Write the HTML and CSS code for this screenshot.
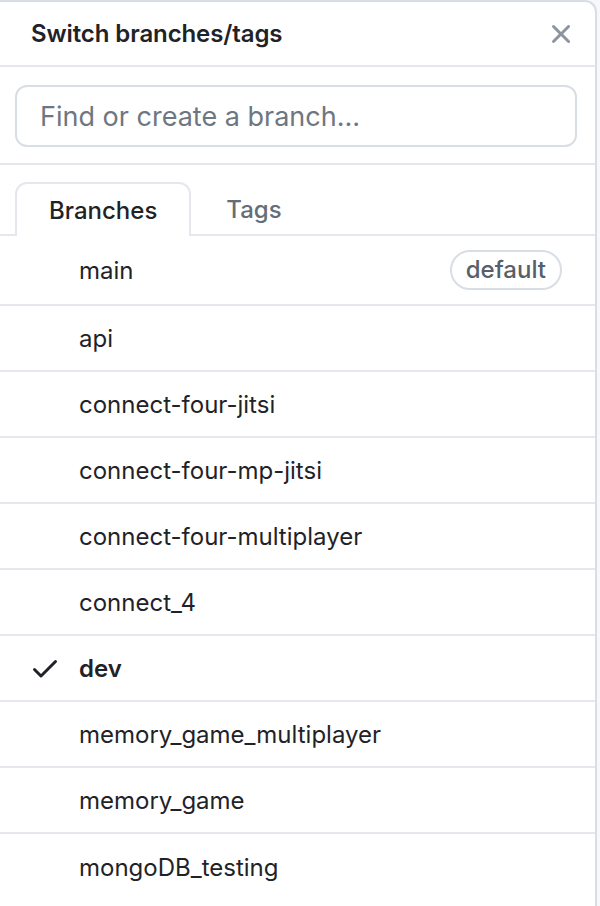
FILE: index.html
```html
<!DOCTYPE html>
<html>
<head>
<meta charset="utf-8">
<link rel="stylesheet" href="styles.css">
</head>
<body>
<div class="page">
  <div class="menu">
    <header class="menu-header">
      <span class="menu-title">Switch branches/tags</span>
      <button class="close" aria-label="Close">
        <svg width="32" height="32" viewBox="0 0 16 16"><path fill="currentColor" d="M3.72 3.72a.75.75 0 0 1 1.06 0L8 6.94l3.220-3.22a.749.749 0 0 1 1.275.326.749.749 0 0 1-.215.734L9.06 8l3.22 3.22a.749.749 0 0 1-.326 1.275.749.749 0 0 1-.734-.215L8 9.06l-3.22 3.22a.751.751 0 0 1-1.042-.018.751.751 0 0 1-.018-1.042L6.94 8 3.72 4.78a.75.75 0 0 1 0-1.06Z"/></svg>
      </button>
    </header>
    <div class="filter">
      <input class="filter-input" type="text" placeholder="Find or create a branch…">
    </div>
    <nav class="tabs">
      <span class="tab selected">Branches</span>
      <span class="tab">Tags</span>
    </nav>
    <ul class="list">
      <li class="item"><span class="check"></span><span class="name">main</span><span class="badge">default</span></li>
      <li class="item"><span class="check"></span><span class="name">api</span></li>
      <li class="item"><span class="check"></span><span class="name">connect-four-jitsi</span></li>
      <li class="item"><span class="check"></span><span class="name">connect-four-mp-jitsi</span></li>
      <li class="item"><span class="check"></span><span class="name">connect-four-multiplayer</span></li>
      <li class="item"><span class="check"></span><span class="name">connect_4</span></li>
      <li class="item current"><span class="check"><svg width="32" height="32" viewBox="0 0 16 16"><path fill="currentColor" d="M13.78 4.22a.75.75 0 0 1 0 1.06l-7.25 7.25a.75.75 0 0 1-1.060 0L2.22 9.28a.751.751 0 0 1 .018-1.042.751.751 0 0 1 1.042-.018L6 10.94l6.72-6.72a.75.75 0 0 1 1.06 0Z"/></svg></span><span class="name">dev</span></li>
      <li class="item"><span class="check"></span><span class="name">memory_game_multiplayer</span></li>
      <li class="item"><span class="check"></span><span class="name">memory_game</span></li>
      <li class="item"><span class="check"></span><span class="name">mongoDB_testing</span></li>
    </ul>
  </div>
</div>
</body>
</html>
```

FILE: styles.css
```css
* { box-sizing: border-box; }
html, body { margin: 0; padding: 0; }
body {
  background: #f6f8fa;
  font-family: Inter, "Noto Sans", "Liberation Sans", sans-serif;
  color: #1f2328;
  overflow: hidden;
  height: 906px;
}
.page { width: 600px; }
.menu {
  width: 597px;
  height: 920px;
  background: #fff;
  border-top: 2px solid #d8dee4;
  border-right: 2px solid #d8dee4;
  border-top-right-radius: 12px;
}
.menu-header {
  height: 65px;
  display: flex;
  align-items: center;
  justify-content: space-between;
  padding: 0 18px 0 31px;
  border-bottom: 2px solid #e4e8ec;
}
.menu-title {
  font-size: 24px;
  font-weight: 600;
  letter-spacing: -0.1px;
}
.close {
  border: 0;
  background: none;
  padding: 0;
  color: #8c959f;
  display: flex;
  width: 32px;
  height: 32px;
}
.filter {
  padding: 18px 18px 16px 15px;
  border-bottom: 2px solid #e4e8ec;
}
.filter-input {
  display: block;
  width: 100%;
  height: 62px;
  border: 2px solid #d8dee4;
  border-radius: 12px;
  padding: 0 23px;
  font-family: inherit;
  font-size: 27px;
  color: #1f2328;
  outline: none;
}
.filter-input::placeholder { color: #6e7781; }
.tabs {
  display: flex;
  padding: 17px 0 0 15px;
  border-bottom: 2px solid #e4e8ec;
}
.tab {
  height: 52px;
  display: flex;
  align-items: center;
  padding: 0 33px;
  font-size: 24px;
  font-weight: 500;
  color: #656d76;
  border: 2px solid transparent;
  border-bottom: 0;
  border-radius: 12px 12px 0 0;
  margin-bottom: -2px;
}
.tab.selected {
  color: #1f2328;
  background: #fff;
  border-color: #e4e8ec;
  padding: 0 32px;
  height: 54px;
}
.list { list-style: none; margin: 0; padding: 0; }
.item {
  display: flex;
  align-items: center;
  height: 66px;
  border-bottom: 2px solid #e4e8ec;
  padding: 0 33px 0 29px;
  font-size: 24px;
}
.item:first-child { height: 70px; }
.item:last-child { border-bottom: 0; }
.check {
  width: 32px;
  height: 32px;
  margin-right: 18px;
  display: flex;
  color: #1f2328;
}
.name { flex: 1; }
.current .name { font-weight: 600; }
.badge {
  border: 2px solid #d8dee4;
  border-radius: 20px;
  padding: 3px 14px 4px;
  font-size: 24px;
  font-weight: 500;
  color: #57606a;
}
```
